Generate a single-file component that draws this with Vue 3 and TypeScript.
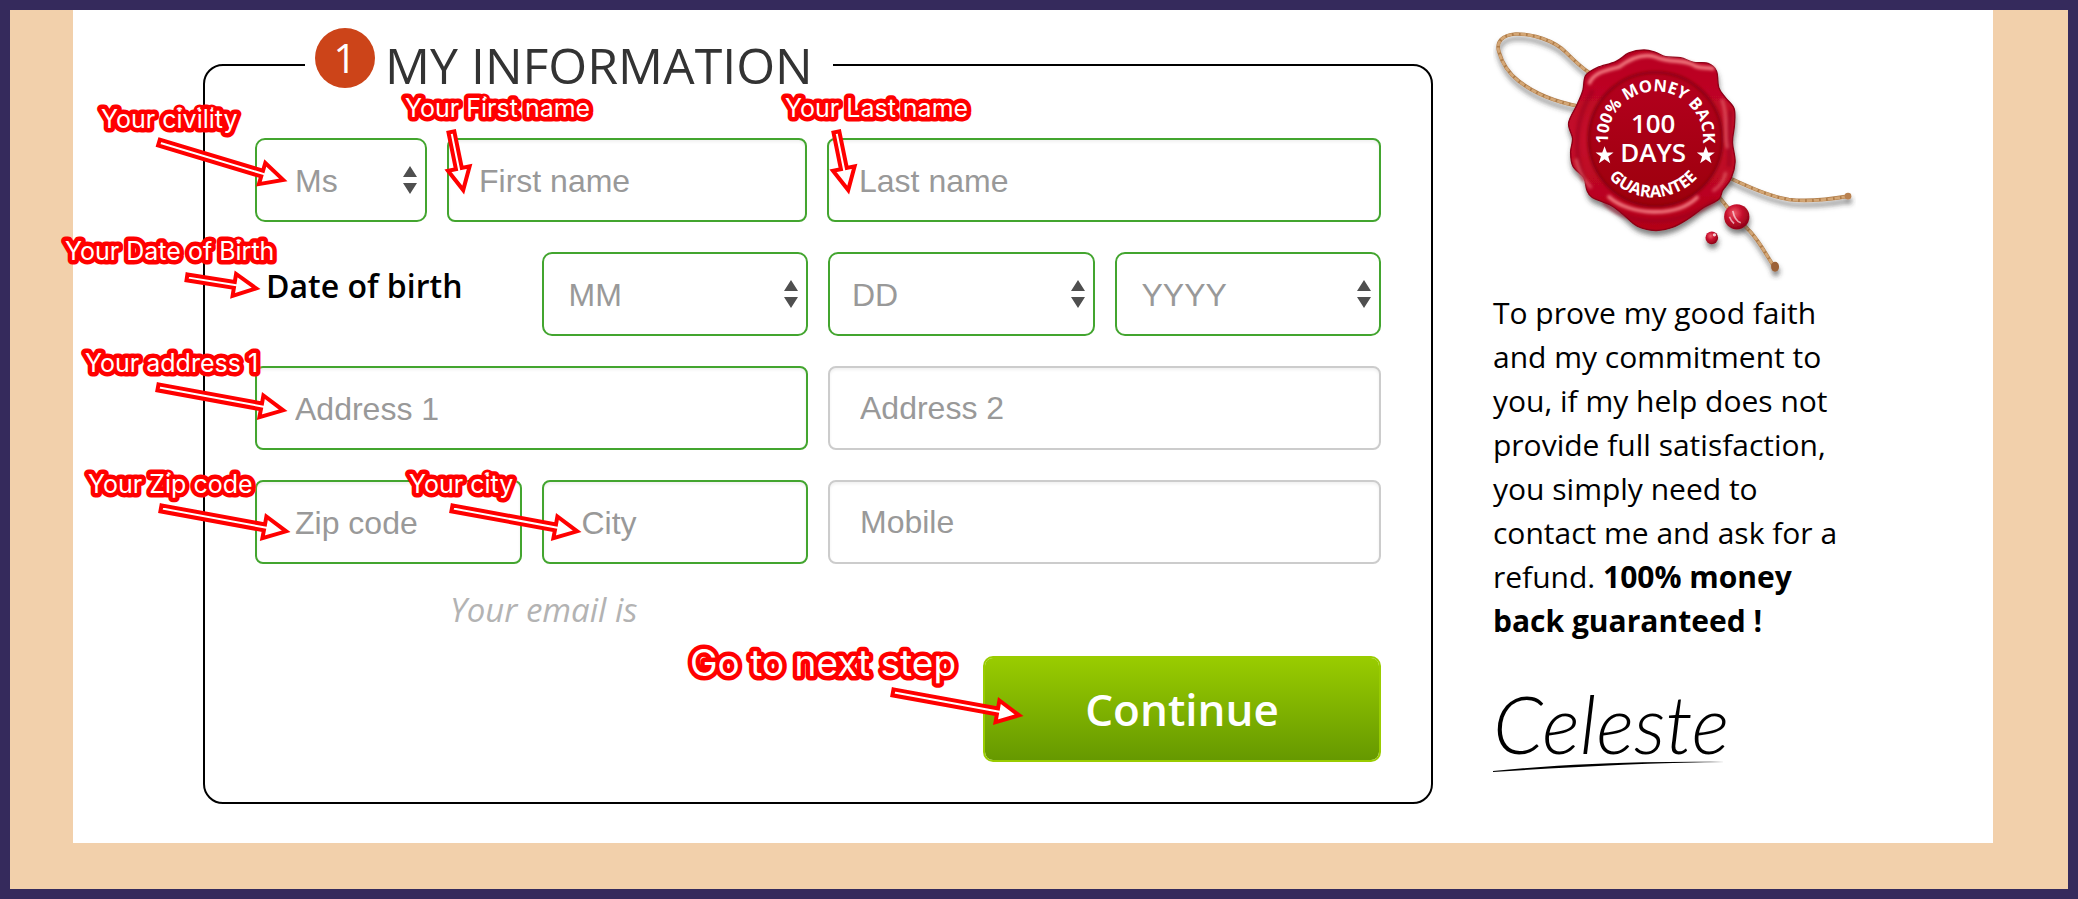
<script setup lang="ts">
import { defineComponent, h, reactive } from 'vue'

type Point = [number, number]

interface Note {
  text: string
  at: Point
  tail: Point
  tip: Point
  large?: boolean
}

const form = reactive({
  civility: 'Ms',
  firstName: '',
  lastName: '',
  month: 'MM',
  day: 'DD',
  year: 'YYYY',
  address1: '',
  address2: '',
  zip: '',
  city: '',
  mobile: '',
})

// Coordinates are relative to the top left corner of the control each note explains.
const notes: Record<string, Note> = {
  civility: { text: 'Your civility', at: [-154, -10], tail: [-98, 4], tip: [32, 43] },
  firstName: { text: 'Your First name', at: [-42, -21], tail: [4, -8], tip: [17, 56] },
  lastName: { text: 'Your Last name', at: [-42, -21], tail: [9, -8], tip: [22, 56] },
  birth: { text: 'Your Date of Birth', at: [-190, 8], tail: [-70, 25], tip: [5, 37] },
  address1: { text: 'Your address 1', at: [-170, 6], tail: [-99, 21], tip: [32, 45] },
  zip: { text: 'Your Zip code', at: [-167, 13], tail: [-96, 28], tip: [35, 52] },
  city: { text: 'Your city', at: [-133, 13], tail: [-92, 28], tip: [39, 52] },
  next: { text: 'Go to next step', at: [-293, 20], tail: [-92, 36], tip: [40, 60], large: true },
}

function arrow(tail: Point, tip: Point): string {
  const dx = tip[0] - tail[0]
  const dy = tip[1] - tail[1]
  const length = Math.hypot(dx, dy)
  const ux = dx / length
  const uy = dy / length
  const place = (along: number, side: number) =>
    `${(tail[0] + ux * along - uy * side).toFixed(1)},${(tail[1] + uy * along + ux * side).toFixed(1)}`
  const neck = length - 26
  return [
    place(2, -3), place(neck, -3), place(neck, -11), place(length - 4, 0),
    place(neck, 11), place(neck, 3), place(2, 3),
  ].join(' ')
}

const Callout = defineComponent({
  props: { note: { type: Object as () => Note, required: true } },
  setup(props) {
    return () =>
      h('svg', { class: ['callout', { large: props.note.large }], width: 1, height: 1 }, [
        h('text', { x: props.note.at[0], y: props.note.at[1] }, props.note.text),
        h('polygon', { points: arrow(props.note.tail, props.note.tip) }),
      ])
  },
})

const Arrows = () =>
  h('svg', { class: 'arrows', width: 14, height: 28, viewBox: '0 0 14 28', 'aria-hidden': 'true' }, [
    h('path', { d: 'M7 0l7 11H0zM7 28L0 17h14z' }),
  ])

// Closed smooth curve through a ring of points.
function smooth(points: Point[]): string {
  const n = points.length
  const at = (i: number) => points[(i + n) % n]
  let d = `M${points[0].join(' ')}`
  for (let i = 0; i < n; i++) {
    const [a, b, c, e] = [at(i - 1), at(i), at(i + 1), at(i + 2)]
    d += `C${b[0] + (c[0] - a[0]) / 6} ${b[1] + (c[1] - a[1]) / 6} ${c[0] - (e[0] - b[0]) / 6} ${c[1] - (e[1] - b[1]) / 6} ${c[0]} ${c[1]}`
  }
  return `${d}Z`
}

const wax = smooth([
  [525, 149], [560, 156], [590, 169], [635, 172], [675, 186], [718, 189], [743, 212], [750, 262],
  [770, 292], [796, 325], [797, 375], [791, 425], [799, 485], [787, 535], [762, 570], [750, 597],
  [705, 622], [655, 658], [610, 682], [560, 691], [505, 678], [462, 642], [425, 615], [370, 592],
  [354, 570], [344, 532], [312, 498], [305, 455], [311, 415], [299, 368], [325, 312], [342, 270],
  [350, 226], [385, 202], [440, 184], [480, 158],
])
</script>

<template>
  <div class="page">
    <main class="card">
      <form class="order" @submit.prevent>
        <fieldset>
          <legend>
            <span class="step">1</span>
            <span class="title">MY INFORMATION</span>
          </legend>

          <div class="rows">
            <div class="row names">
              <div class="field">
                <select v-model="form.civility" class="deep" aria-label="Civility">
                  <option>Ms</option>
                  <option>Mr</option>
                </select>
                <Arrows />
                <Callout :note="notes.civility" />
              </div>
              <div class="field">
                <input v-model="form.firstName" type="text" placeholder="First name" aria-label="First name" />
                <Callout :note="notes.firstName" />
              </div>
              <div class="field">
                <input v-model="form.lastName" type="text" placeholder="Last name" aria-label="Last name" />
                <Callout :note="notes.lastName" />
              </div>
            </div>

            <div class="row quarters" role="group" aria-labelledby="birth">
              <div class="field">
                <span id="birth" class="birth">Date of birth</span>
                <Callout :note="notes.birth" />
              </div>
              <div class="field">
                <select v-model="form.month" aria-label="Month">
                  <option>MM</option>
                  <option v-for="m in 12" :key="m">{{ m }}</option>
                </select>
                <Arrows />
              </div>
              <div class="field">
                <select v-model="form.day" class="tight" aria-label="Day">
                  <option>DD</option>
                  <option v-for="d in 31" :key="d">{{ d }}</option>
                </select>
                <Arrows />
              </div>
              <div class="field">
                <select v-model="form.year" aria-label="Year">
                  <option>YYYY</option>
                  <option v-for="y in 80" :key="y">{{ 2005 - y }}</option>
                </select>
                <Arrows />
              </div>
            </div>

            <div class="row halves">
              <div class="field">
                <input v-model="form.address1" class="deep" type="text" placeholder="Address 1" aria-label="Address 1" />
                <Callout :note="notes.address1" />
              </div>
              <div class="field">
                <input v-model="form.address2" class="optional" type="text" placeholder="Address 2" aria-label="Address 2" />
              </div>
            </div>

            <div class="row quarters">
              <div class="field">
                <input v-model="form.zip" class="deep" type="text" placeholder="Zip code" aria-label="Zip code" />
                <Callout :note="notes.zip" />
              </div>
              <div class="field">
                <input v-model="form.city" class="deep" type="text" placeholder="City" aria-label="City" />
                <Callout :note="notes.city" />
              </div>
              <div class="field wide">
                <input v-model="form.mobile" class="optional" type="tel" placeholder="Mobile" aria-label="Mobile" />
              </div>
            </div>
          </div>

          <p class="email">Your email is</p>

          <div class="actions">
            <div class="field">
              <button type="submit">Continue</button>
              <Callout :note="notes.next" />
            </div>
          </div>
        </fieldset>
      </form>

      <aside>
        <svg class="seal" viewBox="72 83 1090 760" role="img" aria-label="100% money back, 100 days guarantee">
          <defs>
            <linearGradient id="waxFill" x1="0" y1="0" x2="0" y2="1">
              <stop offset="0" stop-color="#b8001f" />
              <stop offset="0.5" stop-color="#c40c2c" />
              <stop offset="1" stop-color="#b30018" />
            </linearGradient>
            <linearGradient id="discFill" x1="0" y1="0" x2="0" y2="1">
              <stop offset="0" stop-color="#b5001f" />
              <stop offset="1" stop-color="#9c000c" />
            </linearGradient>
            <radialGradient id="dropFill" cx="0.4" cy="0.35" r="0.7">
              <stop offset="0" stop-color="#ee5a68" />
              <stop offset="0.45" stop-color="#c8102e" />
              <stop offset="1" stop-color="#860014" />
            </radialGradient>
            <filter id="drop" x="-20%" y="-20%" width="140%" height="150%">
              <feDropShadow dx="2" dy="14" stdDeviation="8" flood-color="#333" flood-opacity="0.6" />
            </filter>
            <filter id="soft" x="-30%" y="-30%" width="160%" height="160%">
              <feGaussianBlur stdDeviation="5" />
            </filter>
            <path id="arcTop" d="M419 440A143 143 0 1 1 701 440" />
            <path id="arcBottom" d="M377 440A178 178 0 0 0 729 440" />
          </defs>

          <g filter="url(#drop)">
            <g class="rope">
              <path d="M365 220C335 200 310 175 290 155C255 120 190 100 140 101C100 104 80 125 90 155C100 190 120 220 150 243C195 278 250 303 330 318" />
              <path d="M775 530C840 560 900 588 960 598C1020 606 1080 598 1140 588" />
              <path d="M745 580C770 620 810 660 845 695C880 735 895 770 920 805" />
            </g>
            <g class="twist">
              <path d="M365 220C335 200 310 175 290 155C255 120 190 100 140 101C100 104 80 125 90 155C100 190 120 220 150 243C195 278 250 303 330 318" />
              <path d="M775 530C840 560 900 588 960 598C1020 606 1080 598 1140 588" />
              <path d="M745 580C770 620 810 660 845 695C880 735 895 770 920 805" />
            </g>
            <circle cx="1138" cy="588" r="10" fill="#b9814f" />
            <ellipse cx="919" cy="800" rx="12" ry="15" fill="#9c6238" />
          </g>

          <g filter="url(#drop)">
            <path :d="wax" fill="url(#waxFill)" stroke="#8d0018" stroke-width="4" />
            <circle cx="804" cy="650" r="38" fill="url(#dropFill)" />
            <circle cx="729" cy="713" r="19" fill="url(#dropFill)" />
          </g>
          <g class="shade" filter="url(#soft)">
            <path d="M346 540C310 450 320 350 372 270M405 605C470 675 620 690 740 600M786 330C775 390 785 440 780 500" />
          </g>
          <circle cx="560" cy="417" r="202" fill="url(#discFill)" />
          <circle cx="560" cy="417" r="201" fill="none" stroke="#85000f" stroke-width="7" filter="url(#soft)" />
          <g class="shine" filter="url(#soft)">
            <path d="M362 248C375 215 420 208 450 200C490 170 530 160 560 170C610 190 650 175 680 198C700 206 715 200 732 205" />
            <path d="M420 590C480 645 620 655 685 592" />
            <path class="faint" d="M760 300C780 350 765 400 775 440M322 480C335 530 350 545 365 560M770 520C765 545 750 560 735 570" />
          </g>
          <path class="glint" d="M792 632q6 30 24 36M782 650q5 14 14 20" />
          <circle cx="737" cy="704" r="5" fill="#fff" opacity="0.8" />

          <g class="words">
            <text class="ring"><textPath href="#arcTop" startOffset="50%" text-anchor="middle">100% MONEY BACK</textPath></text>
            <text class="ring"><textPath href="#arcBottom" startOffset="50%" text-anchor="middle">GUARANTEE</textPath></text>
            <text class="days" x="553" y="397" text-anchor="middle">100</text>
            <text class="days" x="553" y="484" text-anchor="middle">DAYS</text>
            <path d="M407 438l7 19h20l-16 12 6 20-17-12-17 12 6-20-16-12h20zM711 438l7 19h20l-16 12 6 20-17-12-17 12 6-20-16-12h20z" />
          </g>
        </svg>

        <p class="promise">
          To prove my good faith and my commitment to you, if my help does not provide full
          satisfaction, you simply need to contact me and ask for a refund.
          <strong>100% money back guaranteed !</strong>
        </p>

        <div class="signature">
          <span>Celeste</span>
          <svg width="232" height="12" viewBox="0 0 232 12" aria-hidden="true">
            <path d="M0 10C70 3 150 0 232 1C150 2 80 6 0 11z" />
          </svg>
        </div>
      </aside>
    </main>
  </div>
</template>

<style>
body {
  margin: 0;
}

.callout {
  position: absolute;
  top: 0;
  left: 0;
  z-index: 2;
  overflow: visible;
  pointer-events: none;
}

.callout text {
  font: 400 25px Inter, sans-serif;
  fill: #fff;
  stroke: #f00;
  stroke-width: 9px;
  stroke-linejoin: round;
  paint-order: stroke;
}

.callout.large text {
  font-size: 37px;
}

.callout polygon {
  fill: #fff;
  stroke: #f00;
  stroke-width: 4px;
}

.arrows {
  grid-area: 1 / 1;
  align-self: center;
  justify-self: end;
  margin-right: 10px;
  fill: #4f4f4f;
  pointer-events: none;
}
</style>

<style scoped>
.page {
  box-sizing: border-box;
  min-height: 100vh;
  padding: 0 75px 46px 63px;
  border: 10px solid #352a5c;
  background: #f2d0ab;
  font-family: "Open Sans", "Noto Sans", sans-serif;
  color: #000;
}

.card {
  display: flex;
  gap: 60px;
  padding: 18px 130px 39px;
  background: #fff;
}

.order {
  flex: 1;
  min-width: 0;
}

fieldset {
  min-width: 0;
  margin: 0;
  padding: 36px 50px 40px;
  border: 2px solid #000;
  border-radius: 20px;
}

legend {
  display: flex;
  align-items: flex-start;
  gap: 10px;
  margin-left: 50px;
  padding: 0 20px 0 10px;
}

.step {
  width: 60px;
  border-radius: 50%;
  background: #cc4419;
  color: #fff;
  font-size: 40px;
  line-height: 60px;
  text-align: center;
}

.title {
  color: #333;
  font-size: 50px;
  line-height: 74px;
}

.rows {
  display: grid;
  gap: 30px;
}

.row {
  display: grid;
  gap: 20px;
}

.names {
  grid-template-columns: 172px 360fr 554fr;
}

.quarters {
  grid-template-columns: repeat(4, minmax(0, 1fr));
}

.halves {
  grid-template-columns: repeat(2, minmax(0, 1fr));
}

.wide {
  grid-column: span 2;
}

.field {
  position: relative;
  display: grid;
  min-width: 0;
}

input,
select {
  grid-area: 1 / 1;
  box-sizing: border-box;
  width: 100%;
  height: 84px;
  margin: 0;
  padding: 2px 30px 0;
  border: 2px solid #43a52f;
  border-radius: 8px;
  background: #fff;
  color: #999;
  font-family: "Liberation Sans", Arial, sans-serif;
  font-size: 32px;
}

input {
  box-shadow: inset 0 2px 3px #0000000f;
}

input::placeholder {
  color: #999;
  opacity: 1;
}

select {
  padding: 2px 25px 0;
  border-radius: 10px;
  appearance: none;
}

.deep {
  padding-left: 38px;
}

.tight {
  padding-left: 22px;
}

.optional {
  padding-top: 0;
  border-color: #ccc;
}

.birth {
  padding-left: 11px;
  font-size: 32px;
  font-weight: 600;
  line-height: 68px;
}

.email {
  margin: 24px 0;
  padding-left: 195px;
  color: #b3b3b3;
  font-size: 33px;
  font-style: italic;
  line-height: 44px;
}

.actions {
  display: flex;
  justify-content: flex-end;
}

button {
  width: 398px;
  height: 106px;
  border: 2px solid #99cc00;
  border-radius: 10px;
  background: linear-gradient(#99cc00, #669900) padding-box;
  color: #fff;
  font-family: inherit;
  font-size: 44px;
  font-weight: 600;
}

aside {
  width: 370px;
}

.seal {
  display: block;
  width: 363px;
}

.rope,
.twist {
  fill: none;
  stroke: #b07d4a;
  stroke-width: 11px;
}

.twist {
  stroke: #d3a675;
  stroke-width: 8px;
  stroke-dasharray: 16 5;
}

.shade {
  fill: none;
  stroke: #95001a;
  stroke-width: 14px;
  opacity: 0.5;
}

.shine {
  fill: none;
  stroke: #f27a80;
  stroke-width: 11px;
  stroke-linecap: round;
}

.faint {
  opacity: 0.5;
}

.glint {
  fill: none;
  stroke: #fff;
  stroke-width: 5px;
  opacity: 0.6;
}

.words {
  fill: #fff;
}

.ring {
  font-size: 50px;
  font-weight: 700;
}

.days {
  font-size: 78px;
  font-weight: 600;
}

.promise {
  max-width: 352px;
  margin: 10px 0 0;
  font-size: 30px;
  line-height: 44px;
}

.signature {
  margin-top: 42px;
}

.signature span {
  display: block;
  font-family: Lato, cursive;
  font-size: 80px;
  font-style: italic;
  font-weight: 300;
  line-height: 76px;
}

.signature svg {
  display: block;
}
</style>
